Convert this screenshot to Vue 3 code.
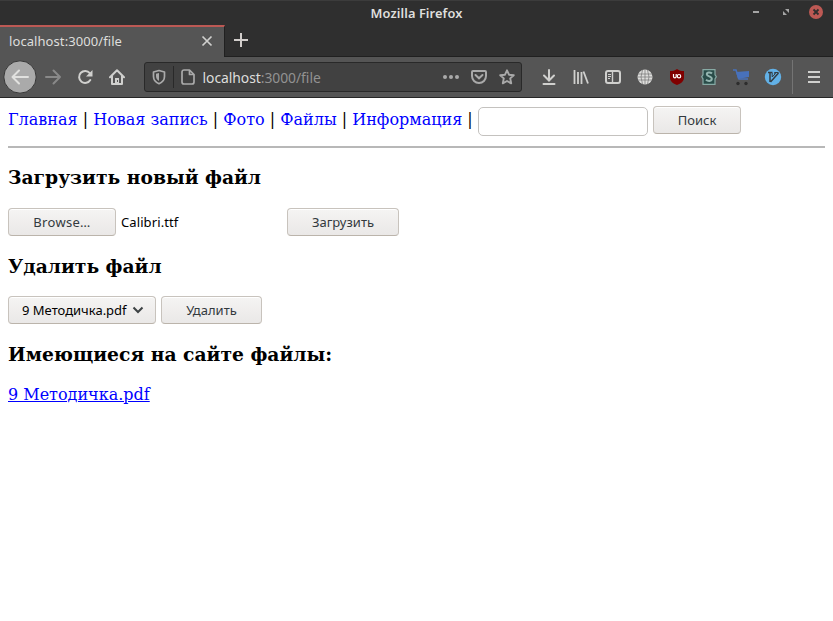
<script setup>
import { ref } from 'vue'

const links = ['Главная', 'Новая запись', 'Фото', 'Файлы', 'Информация']
const query = ref('')
const files = ['9 Методичка.pdf']
</script>

<template>
  <div class="window">
    <header class="titlebar">
      <span class="title">Mozilla Firefox</span>
      <svg class="controls" width="80" height="24" viewBox="0 0 80 24">
        <path d="M3 12h6" stroke="#a5a5a5" stroke-width="2" />
        <path d="M35 9h4v4zM33 11v4h4z" fill="#a5a5a5" />
        <circle cx="66" cy="12" r="7" fill="#bd5954" />
        <path d="M63.500 9.500l5 5M68.500 9.500l-5 5" stroke="#302e2e" stroke-width="1.800" />
      </svg>
    </header>

    <div class="tabs">
      <div class="tab">
        <span class="tab-label">localhost:3000/file</span>
        <svg width="12" height="12" viewBox="0 0 12 12"><path d="M1.500 1.500l9 9M10.500 1.500l-9 9" stroke="#d0d0ce" stroke-width="1.700" /></svg>
      </div>
      <svg class="plus" width="14" height="14" viewBox="0 0 14 14"><path d="M0 7h14M7 0v14" stroke="#d2cecc" stroke-width="2" /></svg>
    </div>

    <div class="toolbar">
      <div class="nav-buttons">
        <span class="slot">
          <svg width="34" height="34" viewBox="0 0 34 34"><circle cx="17" cy="17" r="16.200" fill="#aaa" stroke="#373737" /><path d="M25 17H10M16 10.500L9.500 17l6.500 6.500" fill="none" stroke="#e1e1df" stroke-width="2" stroke-linecap="round" stroke-linejoin="round" /></svg>
        </span>
        <span class="slot">
          <svg width="18" height="18" viewBox="0 0 18 18"><path d="M2 9h14M9.500 2.500L16 9l-6.500 6.500" fill="none" stroke="#898989" stroke-width="2" stroke-linecap="round" stroke-linejoin="round" /></svg>
        </span>
        <span class="slot">
          <svg width="16" height="16" viewBox="0 0 16 16"><path d="M12.800 4.200A6 6 0 1 0 13.300 11" fill="none" stroke="#d0d0ce" stroke-width="2" stroke-linecap="round" /><path d="M15.500 1v6.500H9z" fill="#d0d0ce" /></svg>
        </span>
        <span class="slot">
          <svg width="16" height="16" viewBox="0 0 16 16"><path d="M1 8.300L8 1.200l7 7.100M3 7v8h10V7" fill="none" stroke="#d0d0ce" stroke-width="2" stroke-linecap="round" stroke-linejoin="round" /><path d="M6 9h4v6H6z" fill="#d0d0ce" /><path d="M8.500 11v2" stroke="#555" stroke-width="1" /></svg>
        </span>
      </div>

      <div class="urlbar">
        <svg class="shield" width="14" height="16" viewBox="0 0 14 16"><path d="M7 1.500L12.500 3v4.500C12.500 11 10.500 13.300 7 14.700 3.500 13.300 1.500 11 1.500 7.500V3z" fill="none" stroke="#aaa" stroke-width="1.700" stroke-linejoin="round" /><path d="M7 4v8C5 10.900 4 9.300 4 7V4.700z" fill="#aaa" /></svg>
        <i class="url-separator"></i>
        <svg class="page-icon" width="14" height="16" viewBox="0 0 14 16"><path d="M3 1H8.500L13 5.500V13a2 2 0 0 1-2 2H3a2 2 0 0 1-2-2V3a2 2 0 0 1 2-2zM8.500 1v4.500H13" fill="none" stroke="#aaa" stroke-width="1.700" stroke-linejoin="round" /></svg>
        <span class="url">localhost<span class="path">:3000/file</span></span>
        <div class="url-actions">
          <svg width="16" height="16" viewBox="0 0 16 16"><g fill="#a9a9a9"><circle cx="2" cy="8" r="2" /><circle cx="8" cy="8" r="2" /><circle cx="14" cy="8" r="2" /></g></svg>
          <svg width="16" height="16" viewBox="0 0 16 16"><path d="M2 2h12a1 1 0 0 1 1 1v4a7 7 0 0 1-14 0V3a1 1 0 0 1 1-1z" fill="none" stroke="#a9a9a9" stroke-width="2" /><path d="M4.500 6L8 9.300 11.500 6" fill="none" stroke="#a9a9a9" stroke-width="2" stroke-linecap="round" /></svg>
          <svg width="16" height="16" viewBox="0 0 16 16"><path d="M8 1.300l2 4.400 4.800.5-3.600 3.200 1 4.900L8 12l-4.200 2.300 1-4.900-3.600-3.200L6 5.700z" fill="none" stroke="#a9a9a9" stroke-width="1.900" stroke-linejoin="round" /></svg>
        </div>
      </div>

      <div class="extensions">
        <span class="slot"><svg width="16" height="16" viewBox="0 0 16 16"><path d="M8 1v10M3 6.500L8 11.500l5-5M2.500 15h11" fill="none" stroke="#d0d0ce" stroke-width="2" stroke-linecap="round" /></svg></span>
        <span class="slot"><svg width="16" height="16" viewBox="0 0 16 16"><path d="M1.500 1v14M5 3v12M8.500 3v12" stroke="#d0d0ce" stroke-width="1.800" /><path d="M10.500 2.500l4.500 12" stroke="#d0d0ce" stroke-width="1.800" /></svg></span>
        <span class="slot"><svg width="16" height="16" viewBox="0 0 16 16"><rect x="1" y="2" width="14" height="12" rx="2" fill="none" stroke="#d0d0ce" stroke-width="2" /><path d="M7.500 2v12" stroke="#d0d0ce" stroke-width="1.400" /><path d="M3 5.500h3M3 7.500h3M3 9.500h2" stroke="#d0d0ce" /></svg></span>
        <span class="slot"><svg width="16" height="16" viewBox="0 0 16 16"><circle cx="8" cy="8" r="7.500" fill="#dededc" /><path d="M8 .5v15M1 5h14M.5 8h15M1 11h14M5.500 1Q2.500 8 5.500 15M10.500 1q3 7 0 14" fill="none" stroke="#747474" stroke-width=".7" /></svg></span>
        <span class="slot"><svg width="16" height="16" viewBox="0 0 16 16"><path d="M8 0C5.500 1.700 4 2 1 2v6c0 4 2 6 7 8 5-2 7-4 7-8V2c-3 0-4.500-.3-7-2z" fill="#800000" /><path d="M4.500 5v2.500a1.300 1.300 0 0 0 2.700 0V5" fill="none" stroke="#fff" stroke-width="1.200" /><circle cx="10" cy="7.200" r="1.700" fill="none" stroke="#fff" stroke-width="1.200" /></svg></span>
        <span class="slot"><svg width="16" height="16" viewBox="0 0 16 16"><path d="M2 .7h12v5l1.300 2L14 10v5.300H2V10L.7 7.700 2 5.700z" fill="#294c49" stroke="#87aaa5" stroke-width="1.200" /><path d="M11 4.500C9.500 3 5.800 2.800 5.800 5.300c0 2.700 5 1.500 5 4.500 0 2.700-4 2.600-5.800 1" fill="none" stroke="#94b5b0" stroke-width="2" /></svg></span>
        <span class="slot"><svg width="18" height="18" viewBox="0 0 18 18"><path d="M1 2h3l3 9h9" fill="none" stroke="#4871bb" stroke-width="1.600" /><path d="M4 4l13-1v6L6 11z" fill="#4871bb" /><circle cx="6" cy="15.500" r="1.700" fill="#2d2d2d" /><circle cx="14" cy="15.500" r="1.700" fill="#2d2d2d" /></svg></span>
        <span class="slot"><svg width="18" height="18" viewBox="0 0 18 18"><circle cx="9" cy="9" r="8.200" fill="#62b1e7" /><path d="M4 4.500h4.500M6 4.500V14M6.500 14L14.500 5" fill="none" stroke="#343d43" stroke-width="1.500" /><path d="M8.200 5v4L11.500 5.500H10.500V4.500h4" fill="none" stroke="#343d43" stroke-width="1" /></svg></span>
      </div>
      <i class="menu-separator"></i>
      <svg class="menu" width="12" height="14" viewBox="0 0 12 14"><path d="M0 2h12M0 7h12M0 12h12" stroke="#d0d0ce" stroke-width="2" /></svg>
    </div>

    <main>
      <nav class="site-nav">
        <span class="links"><template v-for="link in links" :key="link"><a href="#">{{ link }}</a> | </template></span>
        <input v-model="query" class="search" type="text" />
        <button class="control find"><span>Поиск</span></button>
      </nav>
      <hr />
      <h3>Загрузить новый файл</h3>
      <div class="row">
        <button class="control browse"><span>Browse…</span></button>
        <span class="filename">Calibri.ttf</span>
        <button class="control upload"><span>Загрузить</span></button>
      </div>
      <h3 class="delete-title">Удалить файл</h3>
      <div class="row">
        <button class="control picker">
          <span>{{ files[0] }}</span>
          <svg width="12" height="8" viewBox="0 0 12 8"><path d="M1.500 1.500L6 6l4.500-4.500" fill="none" stroke="#3d4244" stroke-width="2" /></svg>
        </button>
        <button class="control remove"><span>Удалить</span></button>
      </div>
      <h3 class="list-title">Имеющиеся на сайте файлы:</h3>
      <div class="files"><a v-for="file in files" :key="file" href="#">{{ file }}</a></div>
    </main>
  </div>
</template>

<style>
body { background: #fff; }
</style>

<style scoped>
* { box-sizing: border-box; }
.window { width: 833px; height: 621px; overflow: hidden; background: #fff; font-family: "Noto Sans", "Open Sans", sans-serif; }
svg { display: block; flex-shrink: 0; }
.titlebar { height: 25px; display: grid; grid-template-columns: 83px 1fr 83px; background: #2f2f2f; border-top: 1px solid #3c3c3c; }
.title { grid-column: 2; justify-self: center; font-size: 12.8px; font-weight: 600; line-height: 25px; color: #dfdfdd; letter-spacing: .1px; }
.controls { grid-column: 3; align-self: start; margin-top: -1px; }
.tabs { height: 32px; display: flex; align-items: flex-start; background: #2f2f2f; border-bottom: 1px solid #202020; }
.tab { width: 225px; height: 32px; display: flex; align-items: center; justify-content: space-between; padding: 0 11px 2px 9px; background: #555; border-top: 2px solid #bd5954; border-right: 1px solid #202020; color: #dededc; }
.tab-label { font-size: 13px; white-space: nowrap; letter-spacing: .08px; }
.plus { margin: 8px 0 0 9px; }
.toolbar { height: 41px; display: flex; align-items: center; background: #555; border-bottom: 1px solid #262626; padding-left: 4px; }
.nav-buttons, .extensions { display: flex; }
.nav-buttons { width: 140px; }
.slot { width: 32px; height: 40px; display: flex; align-items: center; justify-content: center; flex: none; }
.nav-buttons .slot:first-child { margin-right: 1px; }
.urlbar { width: 378px; height: 30px; flex: none; display: flex; align-items: center; border: 1px solid #292929; border-radius: 3px; background: #414141; }
.shield { margin-left: 7px; }
.url-separator { width: 1px; height: 22px; background: #292929; margin: 0 7px; }
.url { font-size: 13.900px; line-height: 20px; color: #dededc; margin-left: 7.500px; padding-top: 1px; white-space: nowrap; letter-spacing: -.05px; }
.path { color: #929292; }
.url-actions { display: flex; gap: 12px; margin: 0 6px 0 auto; }
.extensions { margin-left: 11px; }
.menu-separator { width: 1px; height: 34px; background: #747474; margin: 0 15px 0 3px; }

main { padding: 8px 8px 0; font: 16px/19px "DejaVu Serif", serif; color: #000; }
.site-nav { height: 40px; display: flex; align-items: flex-start; }
.links { width: 470px; flex: none; white-space: pre; padding-top: 4px; }
a { color: #0000ff; text-decoration: none; }
.search { width: 170px; height: 29px; margin: 1px 5px 0 0; border: 1px solid #c4c2bf; border-radius: 5px; outline: none; background: #fff; }
hr { height: 2px; margin: 0; border: 0; background: #b8b8b8; }
h3 { height: 22px; margin: 18px 0 20px; font: bold 18.720px/22px "DejaVu Serif", serif; }
.row { height: 28px; display: flex; }
.control { height: 28px; flex: none; display: flex; align-items: center; justify-content: center; padding: 0; border: 1px solid #c8c3bd; border-bottom-color: #bbb4ab; border-radius: 4px; background: linear-gradient(#f5f4f3, #eae8e7); box-shadow: inset 0 1px #fff; color: #333a3e; font: 13px/20px "Noto Sans", sans-serif; white-space: nowrap; }
.find { width: 88px; }
.browse { width: 108px; letter-spacing: .3px; }
.filename { width: 171px; padding-left: 5px; font: 13px/28px "Noto Sans", sans-serif; letter-spacing: .1px; }
.upload { width: 112px; }
.delete-title { margin: 19px 0; }
.picker { width: 148px; justify-content: flex-start; gap: 5px; padding-left: 13px; color: #000; }
.remove { width: 101px; margin-left: 5px; }
.list-title { margin: 19px 0 20px; }
.files a { text-decoration: underline; }
</style>
